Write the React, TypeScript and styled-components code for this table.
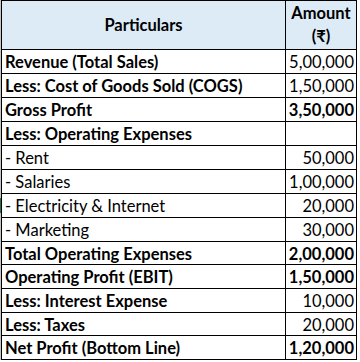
import React from 'react';
import styled, { createGlobalStyle } from 'styled-components';

const GlobalStyle = createGlobalStyle`
  html, body {
    margin: 0;
    padding: 0;
    background: #ffffff;
  }
  body {
    font-family: Lato, "Noto Sans", "DejaVu Sans", sans-serif;
    color: #000000;
  }
`;

const Sheet = styled.div`
  display: flex;
  align-items: flex-start;
`;

const Gutter = styled.div`
  width: 1px;
  align-self: stretch;
  background: #c6c6c6;
`;

const Grid = styled.div`
  display: grid;
  grid-template-columns: 284px 71px;
  border-top: 1px solid #000;
  border-left: 1px solid #000;
  font-size: 16.5px;
`;

const HeaderCell = styled.div`
  box-sizing: border-box;
  height: 49px;
  display: flex;
  align-items: center;
  justify-content: center;
  text-align: center;
  line-height: 23px;
  font-weight: 700;
  background: #ddebf7;
  border-right: 1px solid #000;
  border-bottom: 1px solid #000;
`;

const Cell = styled.div<{ $bold?: boolean; $right?: boolean; $h: number; $marked?: boolean }>`
  position: relative;
  box-sizing: border-box;
  height: ${p => p.$h}px;
  display: flex;
  align-items: center;
  justify-content: ${p => (p.$right ? 'flex-end' : 'flex-start')};
  padding: 1px 2px 0 3px;
  font-weight: ${p => (p.$bold ? 700 : 400)};
  white-space: nowrap;
  border-right: 1px solid #000;
  border-bottom: 1px solid #000;

  ${p =>
    p.$marked &&
    `
    &::before {
      content: '';
      position: absolute;
      left: -2px;
      top: 4px;
      bottom: 4px;
      width: 1px;
      background: #217346;
    }
  `}
`;

type Line = {
  label: string;
  amount: string;
  bold: boolean;
  boldAmount: boolean;
  h: number;
  marked?: boolean;
};

const lines: Line[] = [
  { label: 'Revenue (Total Sales)', amount: '5,00,000', bold: true, boldAmount: false, h: 24 },
  { label: 'Less: Cost of Goods Sold (COGS)', amount: '1,50,000', bold: true, boldAmount: false, h: 24 },
  { label: 'Gross Profit', amount: '3,50,000', bold: true, boldAmount: true, h: 24 },
  { label: 'Less: Operating Expenses', amount: '', bold: true, boldAmount: false, h: 24 },
  { label: '- Rent', amount: '50,000', bold: false, boldAmount: false, h: 24 },
  { label: '- Salaries', amount: '1,00,000', bold: false, boldAmount: false, h: 24 },
  { label: '- Electricity & Internet', amount: '20,000', bold: false, boldAmount: false, h: 24, marked: true },
  { label: '- Marketing', amount: '30,000', bold: false, boldAmount: false, h: 24 },
  { label: 'Total Operating Expenses', amount: '2,00,000', bold: true, boldAmount: true, h: 23 },
  { label: 'Operating Profit (EBIT)', amount: '1,50,000', bold: true, boldAmount: true, h: 24 },
  { label: 'Less: Interest Expense', amount: '10,000', bold: true, boldAmount: false, h: 24 },
  { label: 'Less: Taxes', amount: '20,000', bold: true, boldAmount: false, h: 23 },
  { label: 'Net Profit (Bottom Line)', amount: '1,20,000', bold: true, boldAmount: true, h: 24 },
];

export default function App() {
  return (
    <>
      <GlobalStyle />
      <Sheet>
        <Gutter />
        <Grid>
          <HeaderCell>Particulars</HeaderCell>
          <HeaderCell>
            Amount
            <br />
            (₹)
          </HeaderCell>
          {lines.map(line => (
            <React.Fragment key={line.label}>
              <Cell $h={line.h} $bold={line.bold} $marked={line.marked}>
                {line.label}
              </Cell>
              <Cell $h={line.h} $bold={line.boldAmount} $right>
                {line.amount}
              </Cell>
            </React.Fragment>
          ))}
        </Grid>
      </Sheet>
    </>
  );
}
